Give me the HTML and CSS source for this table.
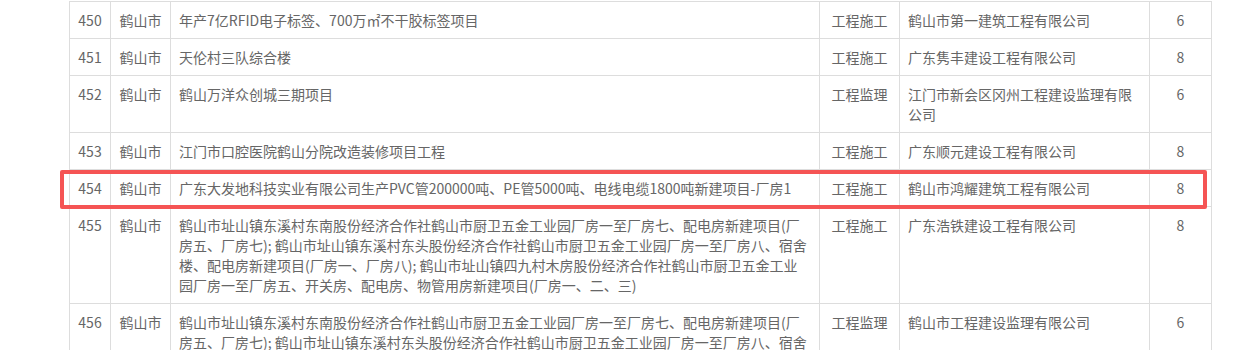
FILE: index.html
```html
<!DOCTYPE html>
<html lang="zh-CN">
<head>
<meta charset="utf-8">
<title>项目列表</title>
<link rel="stylesheet" href="styles.css">
</head>
<body>
<div class="wrap">
  <table class="list">
    <colgroup>
      <col class="c-no"><col class="c-city"><col class="c-name"><col class="c-type"><col class="c-corp"><col class="c-num">
    </colgroup>
    <tbody>
      <tr><td class="ctr">450</td><td class="ctr">鹤山市</td><td>年产7亿RFID电子标签、700万㎡不干胶标签项目</td><td class="ctr">工程施工</td><td>鹤山市第一建筑工程有限公司</td><td class="ctr">6</td></tr>
      <tr><td class="ctr">451</td><td class="ctr">鹤山市</td><td>天伦村三队综合楼</td><td class="ctr">工程施工</td><td>广东隽丰建设工程有限公司</td><td class="ctr">8</td></tr>
      <tr><td class="ctr">452</td><td class="ctr">鹤山市</td><td>鹤山万洋众创城三期项目</td><td class="ctr">工程监理</td><td>江门市新会区冈州工程建设监理有限公司</td><td class="ctr">6</td></tr>
      <tr><td class="ctr">453</td><td class="ctr">鹤山市</td><td>江门市口腔医院鹤山分院改造装修项目工程</td><td class="ctr">工程施工</td><td>广东顺元建设工程有限公司</td><td class="ctr">8</td></tr>
      <tr><td class="ctr">454</td><td class="ctr">鹤山市</td><td>广东大发地科技实业有限公司生产PVC管200000吨、PE管5000吨、电线电缆1800吨新建项目-厂房1</td><td class="ctr">工程施工</td><td>鹤山市鸿耀建筑工程有限公司</td><td class="ctr">8</td></tr>
      <tr><td class="ctr">455</td><td class="ctr">鹤山市</td><td>鹤山市址山镇东溪村东南股份经济合作社鹤山市厨卫五金工业园厂房一至厂房七、配电房新建项目(厂房五、厂房七); 鹤山市址山镇东溪村东头股份经济合作社鹤山市厨卫五金工业园厂房一至厂房八、宿舍楼、配电房新建项目(厂房一、厂房八); 鹤山市址山镇四九村木房股份经济合作社鹤山市厨卫五金工业园厂房一至厂房五、开关房、配电房、物管用房新建项目(厂房一、二、三)</td><td class="ctr">工程施工</td><td>广东浩铁建设工程有限公司</td><td class="ctr">8</td></tr>
      <tr><td class="ctr">456</td><td class="ctr">鹤山市</td><td>鹤山市址山镇东溪村东南股份经济合作社鹤山市厨卫五金工业园厂房一至厂房七、配电房新建项目(厂房五、厂房七); 鹤山市址山镇东溪村东头股份经济合作社鹤山市厨卫五金工业园厂房一至厂房八、宿舍楼、配电房新建项目(厂房一、厂房八); 鹤山市址山镇四九村木房股份经济合作社鹤山市厨卫五金工业园厂房一至厂房五、开关房、配电房、物管用房新建项目(厂房一、二、三)</td><td class="ctr">工程监理</td><td>鹤山市工程建设监理有限公司</td><td class="ctr">6</td></tr>
    </tbody>
  </table>
  <div class="mark"></div>
</div>
</body>
</html>
```

FILE: styles.css
```css
html, body {
  margin: 0;
  padding: 0;
  background: #fff;
}
body {
  font-family: "Noto Sans CJK SC", "Noto Sans", sans-serif;
  font-size: 14px;
  line-height: 20px;
  color: #666;
  overflow: hidden;
}
.wrap {
  position: relative;
  margin: 1px 0 0 69px;
  width: 1142px;
}
.list {
  border-collapse: collapse;
  table-layout: fixed;
  width: 1142px;
}
.c-no { width: 41px; }
.c-city { width: 60px; }
.c-name { width: 649px; }
.c-type { width: 80px; }
.c-corp { width: 250px; }
.c-num { width: 62px; }
.list td {
  border: 1px solid #ddd;
  padding: 8px 8px;
  vertical-align: top;
  text-align: left;
  word-break: break-all;
}
.list td.ctr {
  text-align: center;
  padding-left: 2px;
  padding-right: 2px;
}
.mark {
  position: absolute;
  left: -9px;
  top: 169px;
  width: 1147px;
  height: 39px;
  box-sizing: border-box;
  border: 4px solid #f55454;
  border-radius: 2px;
  pointer-events: none;
}
```
